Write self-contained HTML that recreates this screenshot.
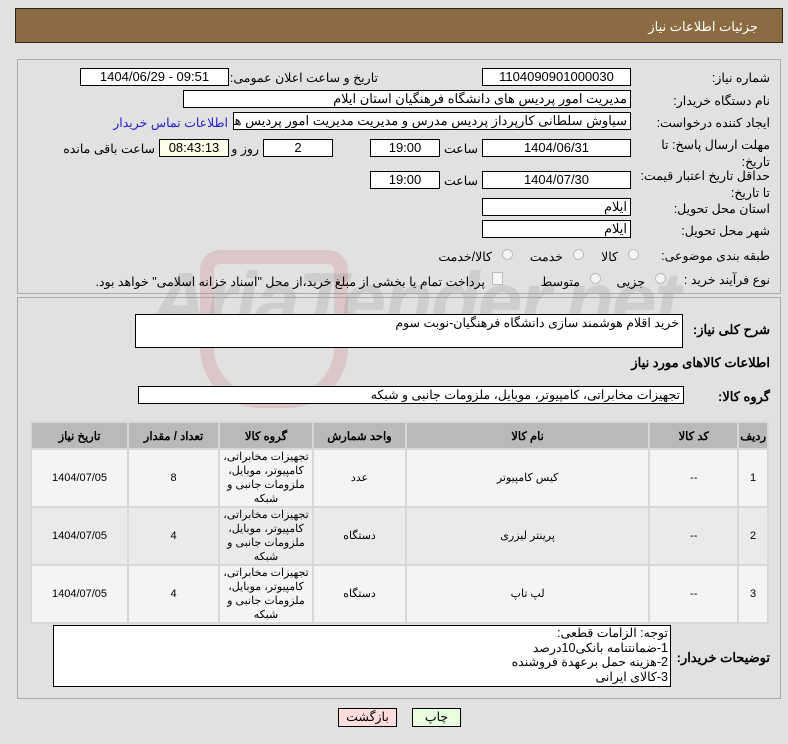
<!DOCTYPE html>
<html><head><meta charset="utf-8"><style>
body{margin:0;width:788px;height:744px;background:#e1e1e1;font-family:"Liberation Sans","Noto Sans CJK SC",sans-serif;font-size:12px;color:#000;position:relative;overflow:hidden}
.a{position:absolute}
.box{position:absolute;background:#fff;border:1px solid #000;box-sizing:border-box;height:18px;line-height:16px;text-align:center;font-size:13px;white-space:nowrap;overflow:hidden}
.l{position:absolute;direction:rtl;text-align:right;white-space:nowrap;font-size:12.5px}
.r{position:absolute;width:11px;height:11px;border-radius:50%;border:1px solid #bbb;background:#f4f4f4;box-sizing:border-box}
table{border-collapse:separate;border-spacing:2px;background:#d8d8d8}
td{text-align:center;font-size:11px;background:#f4f4f4;padding:0;line-height:14px}
th{background:#b9b9b9;font-size:11.5px;height:23px}
</style></head><body>
<div class="a" style="left:15px;top:8px;width:768px;height:35px;background:#8b6b42;border:1px solid #2e2516;box-sizing:border-box"></div>
<div class="l" style="right:30px;top:19px;color:#fff;font-size:13px">جزئیات اطلاعات نیاز</div>
<div class="a" style="left:17px;top:59px;width:764px;height:235px;border:1px solid #aaa;box-sizing:border-box"></div>
<div class="a" style="left:17px;top:297px;width:764px;height:402px;border:1px solid #aaa;box-sizing:border-box"></div>
<div class="a" style="left:150px;top:255px;font-size:80px;font-weight:bold;font-style:italic;color:rgba(150,150,150,.25);white-space:nowrap;letter-spacing:-2px">AriaTender.net</div>
<div class="a" style="left:200px;top:250px;width:120px;height:130px;border:14px solid rgba(200,110,110,.22);border-radius:20px 20px 60px 60px"></div>

<div class="l" style="right:18px;top:70px">شماره نیاز:</div>
<div class="box" style="left:482px;top:68px;width:149px">1104090901000030</div>
<div class="l" style="right:410px;top:70px">تاریخ و ساعت اعلان عمومی:</div>
<div class="box" style="left:80px;top:68px;width:149px">1404/06/29 - 09:51</div>
<div class="l" style="right:18px;top:93px">نام دستگاه خریدار:</div>
<div class="box" style="left:183px;top:90px;width:448px;text-align:right;direction:rtl;padding-right:3px">مدیریت امور پردیس های دانشگاه فرهنگیان استان ایلام</div>
<div class="l" style="right:18px;top:115px">ایجاد کننده درخواست:</div>
<div class="box" style="left:233px;top:112px;width:398px;text-align:right;direction:rtl;padding-right:3px">سیاوش سلطانی کارپرداز پردیس مدرس و مدیریت مدیریت امور پردیس های دانشگاه</div>
<div class="l" style="right:560px;top:115px;color:#2222cc">اطلاعات تماس خریدار</div>
<div class="l" style="right:18px;top:137px;line-height:17px">مهلت ارسال پاسخ: تا<br>تاریخ:</div>
<div class="box" style="left:482px;top:139px;width:149px">1404/06/31</div>
<div class="l" style="right:310px;top:141px">ساعت</div>
<div class="box" style="left:370px;top:139px;width:70px">19:00</div>
<div class="box" style="left:263px;top:139px;width:70px">2</div>
<div class="l" style="right:529px;top:141px">روز و</div>
<div class="box" style="left:159px;top:139px;width:70px;background:#ffffea">08:43:13</div>
<div class="l" style="right:633px;top:141px">ساعت باقی مانده</div>
<div class="l" style="right:18px;top:168px;line-height:17px">حداقل تاریخ اعتبار قیمت:<br>تا تاریخ:</div>
<div class="box" style="left:482px;top:171px;width:149px">1404/07/30</div>
<div class="l" style="right:310px;top:173px">ساعت</div>
<div class="box" style="left:370px;top:171px;width:70px">19:00</div>
<div class="l" style="right:18px;top:201px">استان محل تحویل:</div>
<div class="box" style="left:482px;top:198px;width:149px;text-align:right;padding-right:3px">ایلام</div>
<div class="l" style="right:18px;top:223px">شهر محل تحویل:</div>
<div class="box" style="left:482px;top:220px;width:149px;text-align:right;padding-right:3px">ایلام</div>
<div class="l" style="right:18px;top:248px">طبقه بندی موضوعی:</div>
<div class="r" style="left:628px;top:249px"></div><div class="l" style="right:170px;top:249px">کالا</div>
<div class="r" style="left:573px;top:249px"></div><div class="l" style="right:225px;top:249px">خدمت</div>
<div class="r" style="left:502px;top:249px"></div><div class="l" style="right:296px;top:249px">کالا/خدمت</div>
<div class="l" style="right:18px;top:272px">نوع فرآیند خرید :</div>
<div class="r" style="left:655px;top:273px"></div><div class="l" style="right:143px;top:274px">جزیی</div>
<div class="r" style="left:590px;top:273px"></div><div class="l" style="right:208px;top:274px">متوسط</div>
<div class="a" style="left:492px;top:272px;width:9px;height:11px;border:1px solid #bbb;background:#f4f4f4"></div>
<div class="l" style="right:303px;top:274px">پرداخت تمام یا بخشی از مبلغ خرید،از محل "اسناد خزانه اسلامی" خواهد بود.</div>

<div class="l" style="right:18px;top:322px;font-weight:bold;font-size:13px">شرح کلی نیاز:</div>
<div class="box" style="left:135px;top:314px;width:548px;height:34px;text-align:right;direction:rtl;padding-right:3px;font-size:12.5px">خرید اقلام هوشمند سازی دانشگاه فرهنگیان-نوبت سوم</div>
<div class="l" style="right:18px;top:355px;font-weight:bold;font-size:13px">اطلاعات کالاهای مورد نیاز</div>
<div class="l" style="right:18px;top:389px;font-weight:bold;font-size:13px">گروه کالا:</div>
<div class="box" style="left:138px;top:386px;width:546px;text-align:right;direction:rtl;padding-right:3px;font-size:12.5px">تجهیزات مخابراتی، کامپیوتر، موبایل، ملزومات جانبی و شبکه</div>

<table class="a" style="left:30px;top:421px;width:739px;direction:rtl">
<tr><th style="width:24px">ردیف</th><th style="width:85px">کد کالا</th><th>نام کالا</th><th style="width:89px">واحد شمارش</th><th style="width:90px">گروه کالا</th><th style="width:87px">تعداد / مقدار</th><th style="width:93px">تاریخ نیاز</th></tr>
<tr style="height:54px"><td>1</td><td>--</td><td>کیس کامپیوتر</td><td>عدد</td><td>تجهیزات مخابراتی، کامپیوتر، موبایل، ملزومات جانبی و شبکه</td><td>8</td><td>1404/07/05</td></tr>
<tr style="height:54px"><td style="background:#eaeaea">2</td><td style="background:#eaeaea">--</td><td style="background:#eaeaea">پرینتر لیزری</td><td style="background:#eaeaea">دستگاه</td><td style="background:#eaeaea">تجهیزات مخابراتی، کامپیوتر، موبایل، ملزومات جانبی و شبکه</td><td style="background:#eaeaea">4</td><td style="background:#eaeaea">1404/07/05</td></tr>
<tr style="height:54px"><td>3</td><td>--</td><td>لپ تاپ</td><td>دستگاه</td><td>تجهیزات مخابراتی، کامپیوتر، موبایل، ملزومات جانبی و شبکه</td><td>4</td><td>1404/07/05</td></tr>
</table>

<div class="l" style="right:18px;top:650px;font-weight:bold;font-size:13px">توضیحات خریدار:</div>
<div class="box" style="left:53px;top:625px;width:618px;height:62px;text-align:right;direction:rtl;padding-right:2px;line-height:14.5px;font-size:12.5px;white-space:normal">توجه: الزامات قطعی:<br>1-ضمانتنامه بانکی10درصد<br>2-هزینه حمل برعهدة فروشنده<br>3-کالای ایرانی</div>

<div class="box" style="left:338px;top:708px;width:59px;background:#fdd;height:19px;font-size:12.5px">بازگشت</div>
<div class="box" style="left:412px;top:708px;width:49px;background:#e8ffe0;height:19px;font-size:12.5px">چاپ</div>
</body></html>
